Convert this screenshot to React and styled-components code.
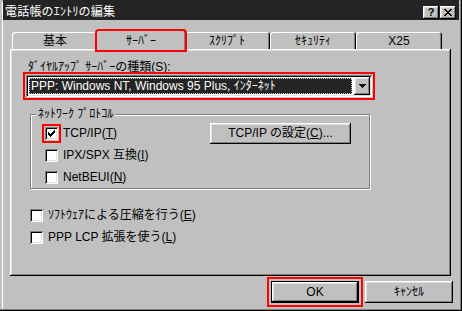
import React from "react";
import styled, { createGlobalStyle } from "styled-components";

const GlobalStyle = createGlobalStyle`
  html, body {
    margin: 0;
    padding: 0;
    background: #c0c0c0;
  }
  body {
    font-family: "Liberation Sans", "Noto Sans CJK JP", sans-serif;
    font-size: 12px;
    color: #000;
  }
  * {
    box-sizing: border-box;
  }
`;

const raised = `
  box-shadow: inset -1px -1px #000, inset 1px 1px #fff,
    inset -2px -2px #808080, inset 2px 2px #dfdfdf;
`;

const sunken = `
  box-shadow: inset 1px 1px #808080, inset -1px -1px #fff,
    inset 2px 2px #000, inset -2px -2px #dfdfdf;
`;

const Window = styled.div`
  width: 462px;
  height: 311px;
  display: flex;
  flex-direction: column;
  padding: 0 3px 3px 3px;
  background: #c0c0c0;
  box-shadow: inset -1px -1px #000, inset -2px -2px #808080,
    inset 2px 2px #c0c0c0, inset 3px 3px #fff;
`;

const TitleBar = styled.div`
  flex: none;
  height: 20px;
  display: flex;
  align-items: center;
  padding: 4px 3px 0 2px;
  background: #242424;
  color: #fff;
`;

const Title = styled.div`
  flex: 1;
  line-height: 13px;
  font-size: 12px;
  letter-spacing: 0.2px;
`;

const CaptionButton = styled.div`
  width: 16px;
  height: 13px;
  margin-left: ${(p) => (p.$gap ? "1px" : "0")};
  display: flex;
  align-items: center;
  justify-content: center;
  background: #c0c0c0;
  color: #000;
  font-weight: bold;
  font-size: 11px;
  line-height: 11px;
  ${raised}
`;

const Body = styled.div`
  flex: 1;
  display: flex;
  flex-direction: column;
  padding: 10px 8px 0 7px;
`;

const TabStrip = styled.div`
  display: flex;
  align-items: flex-end;
  padding-left: 2px;
  position: relative;
  z-index: 1;
`;

const Tab = styled.div`
  flex: none;
  width: ${(p) => (p.$active ? 90 : 86)}px;
  height: ${(p) => (p.$active ? 21 : 17)}px;
  margin: 0 ${(p) => (p.$active ? -2 : 0)}px ${(p) => (p.$active ? -2 : 0)}px;
  position: relative;
  z-index: ${(p) => (p.$active ? 2 : 0)};
  display: flex;
  align-items: center;
  justify-content: center;
  padding-top: ${(p) => (p.$active ? 0 : 1)}px;
  background: #c0c0c0;
  border-radius: 3px 3px 0 0;
  box-shadow: inset 1px 1px #fff, inset -1px 0 #000, inset -2px 0 #808080;
  line-height: 12px;
  outline: ${(p) => (p.$marked ? "2px solid #ff0000" : "none")};
  outline-offset: -1px;
`;

const Panel = styled.div`
  height: 227px;
  display: flex;
  flex-direction: column;
  padding: 12px 10px 0 16px;
  background: #c0c0c0;
  ${raised}
`;

const FieldLabel = styled.div`
  margin-left: 2px;
  line-height: 12px;
  margin-bottom: 2px;
`;

const Combo = styled.div`
  width: 346px;
  height: 22px;
  display: flex;
  align-items: stretch;
  padding: 2px;
  background: #fff;
  ${sunken}
  outline: 2px solid #ff0000;
  outline-offset: 1px;
`;

const ComboValue = styled.div`
  flex: 1;
  margin: 1px 2px 1px 1px;
  padding-left: 2px;
  display: flex;
  align-items: center;
  background: #242424;
  color: #fff;
  line-height: 12px;
  outline: 1px dotted #c8c8c8;
  outline-offset: -1px;
  white-space: nowrap;
`;

const ArrowButton = styled.div`
  width: 16px;
  display: flex;
  align-items: center;
  justify-content: center;
  background: #c0c0c0;
  ${raised}
`;

const Group = styled.div`
  width: 340px;
  height: 75px;
  margin: 17px 0 0 4px;
  display: flex;
  flex-direction: column;
  padding: 0 18px 0 14px;
  border: 1px solid #808080;
  box-shadow: 1px 1px 0 #fff, inset 1px 1px 0 #fff;
`;

const GroupLabel = styled.div`
  align-self: flex-start;
  margin: -7px 0 2px -9px;
  padding: 0 2px;
  line-height: 12px;
  background: #c0c0c0;
`;

const CheckRow = styled.div`
  height: 22px;
  display: flex;
  align-items: center;
  gap: 5px;
  margin-left: ${(p) => p.$indent || 0}px;
`;

const FirstBlock = styled.div`
  margin-top: 15px;
`;

const Box = styled.div`
  flex: none;
  width: 13px;
  height: 13px;
  background: #fff;
  ${sunken}
  outline: ${(p) => (p.$marked ? "2px solid #ff0000" : "none")};
  outline-offset: 1px;
  display: flex;
  align-items: center;
  justify-content: center;
`;

const Label = styled.span`
  line-height: 13px;
  white-space: nowrap;
`;

const Button = styled.div`
  flex: none;
  width: ${(p) => p.$w}px;
  height: ${(p) => p.$h || 22}px;
  display: flex;
  align-items: center;
  justify-content: center;
  background: #c0c0c0;
  line-height: 12px;
  white-space: nowrap;
  ${(p) =>
    p.$default
      ? `box-shadow: inset 0 0 0 1px #000, inset -2px -2px #000, inset 2px 2px #fff,
          inset -3px -3px #808080, inset 3px 3px #dfdfdf;`
      : raised}
  outline: ${(p) => (p.$marked ? "2px solid #ff0000" : "none")};
  outline-offset: 2px;
`;

const Spacer = styled.div`
  flex: 1;
`;

const Footer = styled.div`
  display: flex;
  justify-content: flex-end;
  gap: 6px;
  margin: 5px -2px 0 0;
`;

const CheckMark = () => (
  <svg width="13" height="13" viewBox="0 0 13 13" shapeRendering="crispEdges">
    <path
      d="M3 5h1v3h-1z M4 6h1v3h-1z M5 7h1v3h-1z M6 6h1v3h-1z M7 5h1v3h-1z M8 4h1v3h-1z M9 3h1v3h-1z"
      fill="#000"
    />
  </svg>
);

const Check = ({ checked, marked }) => (
  <Box $marked={marked}>{checked && <CheckMark />}</Box>
);

const App = () => {
  return (
    <React.Fragment>
      <GlobalStyle />
      <Window>
        <TitleBar>
          <Title>電話帳のｴﾝﾄﾘの編集</Title>
          <CaptionButton>?</CaptionButton>
          <CaptionButton $gap>
            <svg width="8" height="7" viewBox="0 0 8 7" shapeRendering="crispEdges">
              <path
                d="M0 0h2v1h-2z M6 0h2v1h-2z M1 1h2v1h-2z M5 1h2v1h-2z M2 2h4v1h-4z M3 3h2v1h-2z M2 4h4v1h-4z M1 5h2v1h-2z M5 5h2v1h-2z M0 6h2v1h-2z M6 6h2v1h-2z"
                fill="#000"
              />
            </svg>
          </CaptionButton>
        </TitleBar>

        <Body>
          <TabStrip>
            <Tab>基本</Tab>
            <Tab $active $marked>
              ｻｰﾊﾞｰ
            </Tab>
            <Tab>ｽｸﾘﾌﾟﾄ</Tab>
            <Tab>ｾｷｭﾘﾃｨ</Tab>
            <Tab>X25</Tab>
          </TabStrip>

          <Panel>
            <FieldLabel>ﾀﾞｲﾔﾙｱｯﾌﾟ ｻｰﾊﾞｰの種類(S):</FieldLabel>
            <Combo>
              <ComboValue>PPP: Windows NT, Windows 95 Plus, ｲﾝﾀｰﾈｯﾄ</ComboValue>
              <ArrowButton>
                <svg width="7" height="4" viewBox="0 0 7 4" shapeRendering="crispEdges">
                  <path d="M0 0h7v1h-7z M1 1h5v1h-5z M2 2h3v1h-3z M3 3h1v1h-1z" fill="#000" />
                </svg>
              </ArrowButton>
            </Combo>

            <Group>
              <GroupLabel>ﾈｯﾄﾜｰｸ ﾌﾟﾛﾄｺﾙ</GroupLabel>
              <CheckRow>
                <Check checked marked />
                <Label>
                  TCP/IP(<u>T</u>)
                </Label>
                <Spacer />
                <Button $w={141} $h={21}>
                  TCP/IP の設定(<u>C</u>)...
                </Button>
              </CheckRow>
              <CheckRow>
                <Check />
                <Label>
                  IPX/SPX 互換(<u>I</u>)
                </Label>
              </CheckRow>
              <CheckRow>
                <Check />
                <Label>
                  NetBEUI(<u>N</u>)
                </Label>
              </CheckRow>
            </Group>

            <FirstBlock>
              <CheckRow $indent={4}>
                <Check />
                <Label>
                  ｿﾌﾄｳｪｱによる圧縮を行う(<u>E</u>)
                </Label>
              </CheckRow>
              <CheckRow $indent={4}>
                <Check />
                <Label>
                  PPP LCP 拡張を使う(<u>L</u>)
                </Label>
              </CheckRow>
            </FirstBlock>
          </Panel>

          <Footer>
            <Button $w={88} $default $marked>
              OK
            </Button>
            <Button $w={88}>ｷｬﾝｾﾙ</Button>
          </Footer>
        </Body>
      </Window>
    </React.Fragment>
  );
};

export default App;
